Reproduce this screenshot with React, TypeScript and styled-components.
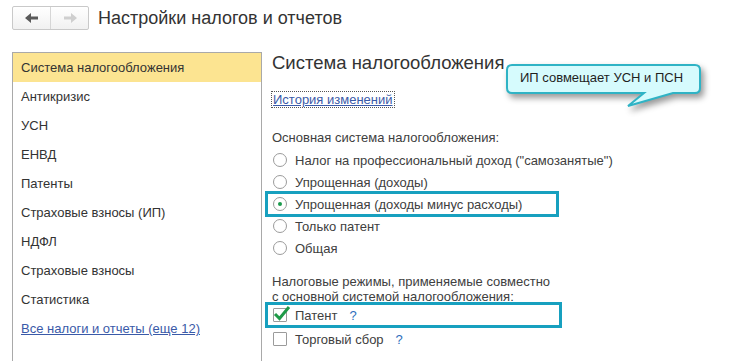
import React from 'react';
import styled, { createGlobalStyle } from 'styled-components';

const GlobalStyle = createGlobalStyle`
  body {
    margin: 0;
    background: #fff;
    font-family: "Liberation Sans", Arial, sans-serif;
    overflow: hidden;
  }
`;

const sections = [
  'Система налогообложения',
  'Антикризис',
  'УСН',
  'ЕНВД',
  'Патенты',
  'Страховые взносы (ИП)',
  'НДФЛ',
  'Страховые взносы',
  'Статистика',
];

const regimes = [
  'Налог на профессиональный доход ("самозанятые")',
  'Упрощенная (доходы)',
  'Упрощенная (доходы минус расходы)',
  'Только патент',
  'Общая',
];

const Arrow = ({ dir, color }: { dir: 'left' | 'right'; color: string }) => (
  <svg width="14" height="10" viewBox="0 0 14 10">
    <g transform={dir === 'right' ? 'translate(14,0) scale(-1,1)' : undefined}>
      <path d="M0 5 L6 0 V3.5 H13 V6.5 H6 V10 Z" fill={color} />
    </g>
  </svg>
);

const Bubble = () => (
  <BubbleSvg width="204" height="48" viewBox="0 0 204 48">
    <path
      d="M7 1 H190 Q195 1 195 6 V24 Q195 29 190 29 H168 L123 42 L139 29 H7 Q2 29 2 24 V6 Q2 1 7 1 Z"
      fill="#d6fbfd"
      stroke="#2fb3c5"
      strokeWidth="2"
    />
  </BubbleSvg>
);

export default function App() {
  return (
    <Page>
      <GlobalStyle />
      <Header>
        <NavGroup>
          <NavButton>
            <Arrow dir="left" color="#5a5a5a" />
          </NavButton>
          <NavButton>
            <Arrow dir="right" color="#cfcfcf" />
          </NavButton>
        </NavGroup>
        <Title>Настройки налогов и отчетов</Title>
      </Header>
      <Body>
        <Sidebar>
          {sections.map((s, i) => (
            <SideItem key={s} active={i === 0}>
              {s}
            </SideItem>
          ))}
          <SideItem>
            <SideLink>Все налоги и отчеты (еще 12)</SideLink>
          </SideItem>
        </Sidebar>
        <Content>
          <Heading>Система налогообложения</Heading>
          <HistoryLink>История изменений</HistoryLink>
          <Label>Основная система налогообложения:</Label>
          <OptionList $offset={4}>
            {regimes.map((r, i) => (
              <Option key={r} highlighted={i === 2}>
                <Radio checked={i === 2} />
                {r}
              </Option>
            ))}
          </OptionList>
          <Label $spaced>
            Налоговые режимы, применяемые совместно
            <br />с основной системой налогообложения:
          </Label>
          <OptionList $offset={-1}>
            <Option highlighted tall>
              <Checkbox>
                <svg width="18" height="16" viewBox="0 0 18 16">
                  <path d="M2 9 L6.5 13.5 L16 2" fill="none" stroke="#1f9a48" strokeWidth="3" />
                </svg>
              </Checkbox>
              Патент
              <Help>?</Help>
            </Option>
            <Option tall>
              <Checkbox />
              Торговый сбор
              <Help>?</Help>
            </Option>
          </OptionList>
        </Content>
      </Body>
      <Callout>
        <Bubble />
        <CalloutText>ИП совмещает УСН и ПСН</CalloutText>
      </Callout>
    </Page>
  );
}

const Page = styled.div`
  position: relative;
  width: 730px;
  height: 361px;
  overflow: hidden;
  color: #404040;
  font-size: 13px;
`;

const Header = styled.div`
  display: flex;
  align-items: center;
  gap: 9px;
  height: 24px;
  padding: 6px 0 22px 12px;
`;

const NavGroup = styled.div`
  display: flex;
  height: 24px;
  border: 1px solid #c9c9c9;
  border-radius: 2px;
  box-sizing: border-box;
  background: linear-gradient(#ffffff, #f1f1f1);
`;

const NavButton = styled.div`
  width: 37px;
  display: flex;
  align-items: center;
  justify-content: center;
  & + & {
    border-left: 1px solid #d6d6d6;
  }
`;

const Title = styled.h1`
  margin: 0;
  font-size: 18px;
  font-weight: normal;
  color: #333;
  line-height: 24px;
`;

const Body = styled.div`
  display: flex;
  padding-left: 12px;
`;

const Sidebar = styled.div`
  width: 250px;
  height: 320px;
  box-sizing: border-box;
  border: 1px solid #a9a9a9;
  border-bottom: none;
`;

const SideItem = styled.div<{ active?: boolean }>`
  height: 29px;
  line-height: 29px;
  padding-left: 8px;
  color: #333;
  background: ${(p) => (p.active ? '#fce491' : 'transparent')};
`;

const SideLink = styled.a`
  color: #3a5aa8;
  text-decoration: underline;
`;

const Content = styled.div`
  display: flex;
  flex-direction: column;
  align-items: flex-start;
  padding-left: 10px;
`;

const Heading = styled.h2`
  margin: 0;
  font-size: 18.5px;
  font-weight: normal;
  line-height: 22px;
  color: #333;
`;

const HistoryLink = styled.a`
  margin-top: 17px;
  margin-left: -1px;
  padding: 0 1px;
  line-height: 15px;
  border: 1px dotted #555;
  color: #3a5aa8;
  text-decoration: underline;
`;

const Label = styled.div<{ $spaced?: boolean }>`
  margin-top: ${(p) => (p.$spaced ? '15px' : '22px')};
  line-height: 15px;
  color: #404040;
`;

const OptionList = styled.div<{ $offset: number }>`
  margin-top: ${(p) => p.$offset}px;
  margin-left: -7px;
  display: flex;
  flex-direction: column;
`;

const Option = styled.div<{ highlighted?: boolean; tall?: boolean }>`
  position: relative;
  display: flex;
  align-items: center;
  gap: 8px;
  height: ${(p) => (p.tall ? '24px' : '22px')};
  padding-left: 8px;
  white-space: nowrap;
  &::after {
    content: '';
    display: ${(p) => (p.highlighted ? 'block' : 'none')};
    position: absolute;
    left: 0;
    top: ${(p) => (p.tall ? '-1px' : '-2px')};
    bottom: ${(p) => (p.tall ? '-1px' : '-2px')};
    width: ${(p) => (p.tall ? '297px' : '294px')};
    box-sizing: border-box;
    border: 3px solid #17a0bf;
  }
`;

const Radio = styled.span<{ checked?: boolean }>`
  width: 14px;
  height: 14px;
  box-sizing: border-box;
  border: 1px solid #9b9b9b;
  border-radius: 50%;
  background: #fff;
  display: flex;
  align-items: center;
  justify-content: center;
  &::before {
    content: '';
    display: ${(p) => (p.checked ? 'block' : 'none')};
    width: 4px;
    height: 4px;
    border-radius: 50%;
    background: #1a9a4c;
  }
`;

const Checkbox = styled.span`
  position: relative;
  width: 14px;
  height: 14px;
  box-sizing: border-box;
  border: 1px solid #9b9b9b;
  border-radius: 1px;
  background: #fff;
  svg {
    position: absolute;
    left: -1px;
    top: -4px;
  }
`;

const Help = styled.span`
  margin-left: 4px;
  color: #2c6fbd;
`;

const Callout = styled.div`
  position: absolute;
  left: 505px;
  top: 64px;
  width: 204px;
  height: 48px;
`;

const BubbleSvg = styled.svg`
  position: absolute;
  left: 0;
  top: 0;
  filter: drop-shadow(3px 4px 3px rgba(0, 0, 0, 0.4));
`;

const CalloutText = styled.div`
  position: relative;
  padding: 6px 0 0 15px;
  line-height: 16px;
  color: #1f1f1f;
`;
